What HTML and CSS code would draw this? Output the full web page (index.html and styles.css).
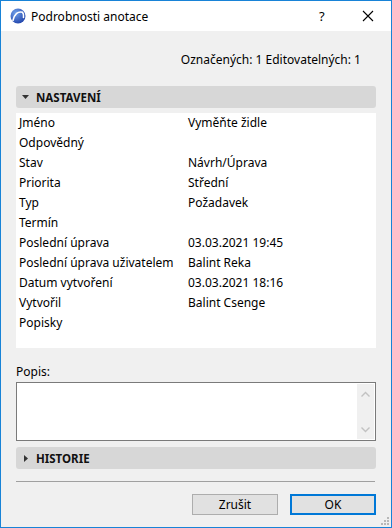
FILE: index.html
```html
<!DOCTYPE html>
<html>
<head>
<meta charset="utf-8">
<link rel="stylesheet" href="styles.css">
</head>
<body>
<div class="window">
  <div class="titlebar">
    <svg class="app-icon" width="16" height="16" viewBox="0 0 16 16">
      <defs>
        <radialGradient id="g" cx="0.35" cy="0.3" r="0.8">
          <stop offset="0" stop-color="#6f9fe8"/>
          <stop offset="1" stop-color="#1d3fa8"/>
        </radialGradient>
      </defs>
      <circle cx="8" cy="8" r="7.5" fill="url(#g)"/>
      <path d="M3 12.5 C4.5 6 8 3 12.5 4.2 C13.6 5.5 13.8 7.5 13.5 9.5" fill="none" stroke="#ffffff" stroke-width="1.6" stroke-linecap="round"/>
    </svg>
    <span class="title">Podrobnosti anotace</span>
    <span class="tb-help">?</span>
    <svg class="tb-close" width="12" height="12" viewBox="0 0 12 12">
      <path d="M1 1 L11 11 M11 1 L1 11" stroke="#000" stroke-width="1.1"/>
    </svg>
  </div>
  <div class="content">
    <div class="counts">Označených: 1 Editovatelných: 1</div>
    <div class="section-header">
      <svg class="tri" width="7" height="4" viewBox="0 0 7 4"><path d="M0 0 H7 L3.5 4 Z" fill="#333"/></svg>
      <span>NASTAVENÍ</span>
    </div>
    <div class="props">
      <div class="row"><span class="k">Jméno</span><span class="v">Vyměňte židle</span></div>
      <div class="row"><span class="k">Odpovědný</span><span class="v"></span></div>
      <div class="row"><span class="k">Stav</span><span class="v">Návrh/Úprava</span></div>
      <div class="row"><span class="k">Priorita</span><span class="v">Střední</span></div>
      <div class="row"><span class="k">Typ</span><span class="v">Požadavek</span></div>
      <div class="row"><span class="k">Termín</span><span class="v"></span></div>
      <div class="row"><span class="k">Poslední úprava</span><span class="v">03.03.2021 19:45</span></div>
      <div class="row"><span class="k">Poslední úprava uživatelem</span><span class="v">Balint Reka</span></div>
      <div class="row"><span class="k">Datum vytvoření</span><span class="v">03.03.2021 18:16</span></div>
      <div class="row"><span class="k">Vytvořil</span><span class="v">Balint Csenge</span></div>
      <div class="row"><span class="k">Popisky</span><span class="v"></span></div>
    </div>
    <div class="popis-label">Popis:</div>
    <div class="textarea">
      <div class="text-body"></div>
      <div class="scrollbar">
        <svg width="9" height="6" viewBox="0 0 9 6"><path d="M0.5 5.5 L4.5 1.5 L8.5 5.5" fill="none" stroke="#c2c2c2" stroke-width="1.4"/></svg>
        <svg width="9" height="6" viewBox="0 0 9 6"><path d="M0.5 0.5 L4.5 4.5 L8.5 0.5" fill="none" stroke="#c2c2c2" stroke-width="1.4"/></svg>
      </div>
    </div>
    <div class="section-header collapsed">
      <svg class="tri" width="4" height="7" viewBox="0 0 4 7"><path d="M0 0 V7 L4 3.5 Z" fill="#333"/></svg>
      <span>HISTORIE</span>
    </div>
    <div class="separator"></div>
    <div class="buttons">
      <div class="btn">Zrušit</div>
      <div class="btn primary">OK</div>
    </div>
  </div>
  <svg class="grip" width="9" height="9" viewBox="0 0 9 9">
    <rect x="6" y="0" width="2" height="2" fill="#b8b8b8"/>
    <rect x="3" y="3" width="2" height="2" fill="#b8b8b8"/>
    <rect x="6" y="3" width="2" height="2" fill="#b8b8b8"/>
    <rect x="0" y="6" width="2" height="2" fill="#b8b8b8"/>
    <rect x="3" y="6" width="2" height="2" fill="#b8b8b8"/>
    <rect x="6" y="6" width="2" height="2" fill="#b8b8b8"/>
  </svg>
</div>
</body>
</html>
```
FILE: styles.css
```css
html, body {
  margin: 0;
  padding: 0;
}
body {
  font-family: "Noto Sans", "Open Sans", sans-serif;
  font-size: 12px;
  color: #000;
  background: #fff;
}
.window {
  position: relative;
  width: 392px;
  height: 528px;
  box-sizing: border-box;
  border: 1px solid #1883d7;
  background: #f0f0f0;
  display: flex;
  flex-direction: column;
}
.titlebar {
  height: 30px;
  background: #fff;
  display: flex;
  align-items: center;
  flex-shrink: 0;
}
.app-icon {
  margin-left: 9px;
}
.title {
  margin-left: 5px;
  font-size: 12px;
  flex: 1;
}
.tb-help {
  font-size: 13px;
  width: 14px;
  margin-right: 29px;
}
.tb-close {
  margin-right: 17px;
}
.content {
  padding: 0 15px;
  display: flex;
  flex-direction: column;
  flex: 1;
}
.counts {
  text-align: right;
  padding-right: 15px;
  margin-top: 20px;
  height: 17px;
  line-height: 17px;
}
.section-header {
  margin-top: 18px;
  height: 22px;
  background: #d7d7d7;
  border-radius: 3px;
  display: flex;
  align-items: center;
  font-weight: bold;
  font-size: 11.5px;
  color: #111;
}
.section-header .tri {
  margin-left: 6px;
  margin-right: 7px;
}
.section-header.collapsed {
  margin-top: 6px;
}
.section-header.collapsed .tri {
  margin-left: 8px;
  margin-right: 8px;
}
.props {
  margin-top: 5px;
  background: #fff;
  height: 235px;
}
.row {
  height: 20px;
  line-height: 20px;
  display: flex;
}
.row .k {
  width: 169px;
  padding-left: 3px;
}
.popis-label {
  margin-top: 15px;
  height: 17px;
  line-height: 17px;
}
.textarea {
  margin-top: 2px;
  height: 59px;
  box-sizing: border-box;
  border: 1px solid #7a7a7a;
  background: #fff;
  display: flex;
}
.text-body {
  flex: 1;
}
.scrollbar {
  width: 17px;
  margin: 1px;
  background: #f0f0f0;
  display: flex;
  flex-direction: column;
  align-items: center;
  justify-content: space-between;
  padding: 7px 0 6px;
}
.separator {
  margin-top: 12px;
  height: 1px;
  background: #a0a0a0;
  margin-right: 1px;
}
.buttons {
  margin-top: 12px;
  display: flex;
  justify-content: flex-end;
  gap: 12px;
}
.btn {
  width: 86px;
  height: 21px;
  box-sizing: border-box;
  border: 1px solid #adadad;
  background: #e1e1e1;
  display: flex;
  align-items: center;
  justify-content: center;
}
.btn.primary {
  border: 2px solid #0078d7;
}
.grip {
  position: absolute;
  right: 1px;
  bottom: 1px;
}
```
